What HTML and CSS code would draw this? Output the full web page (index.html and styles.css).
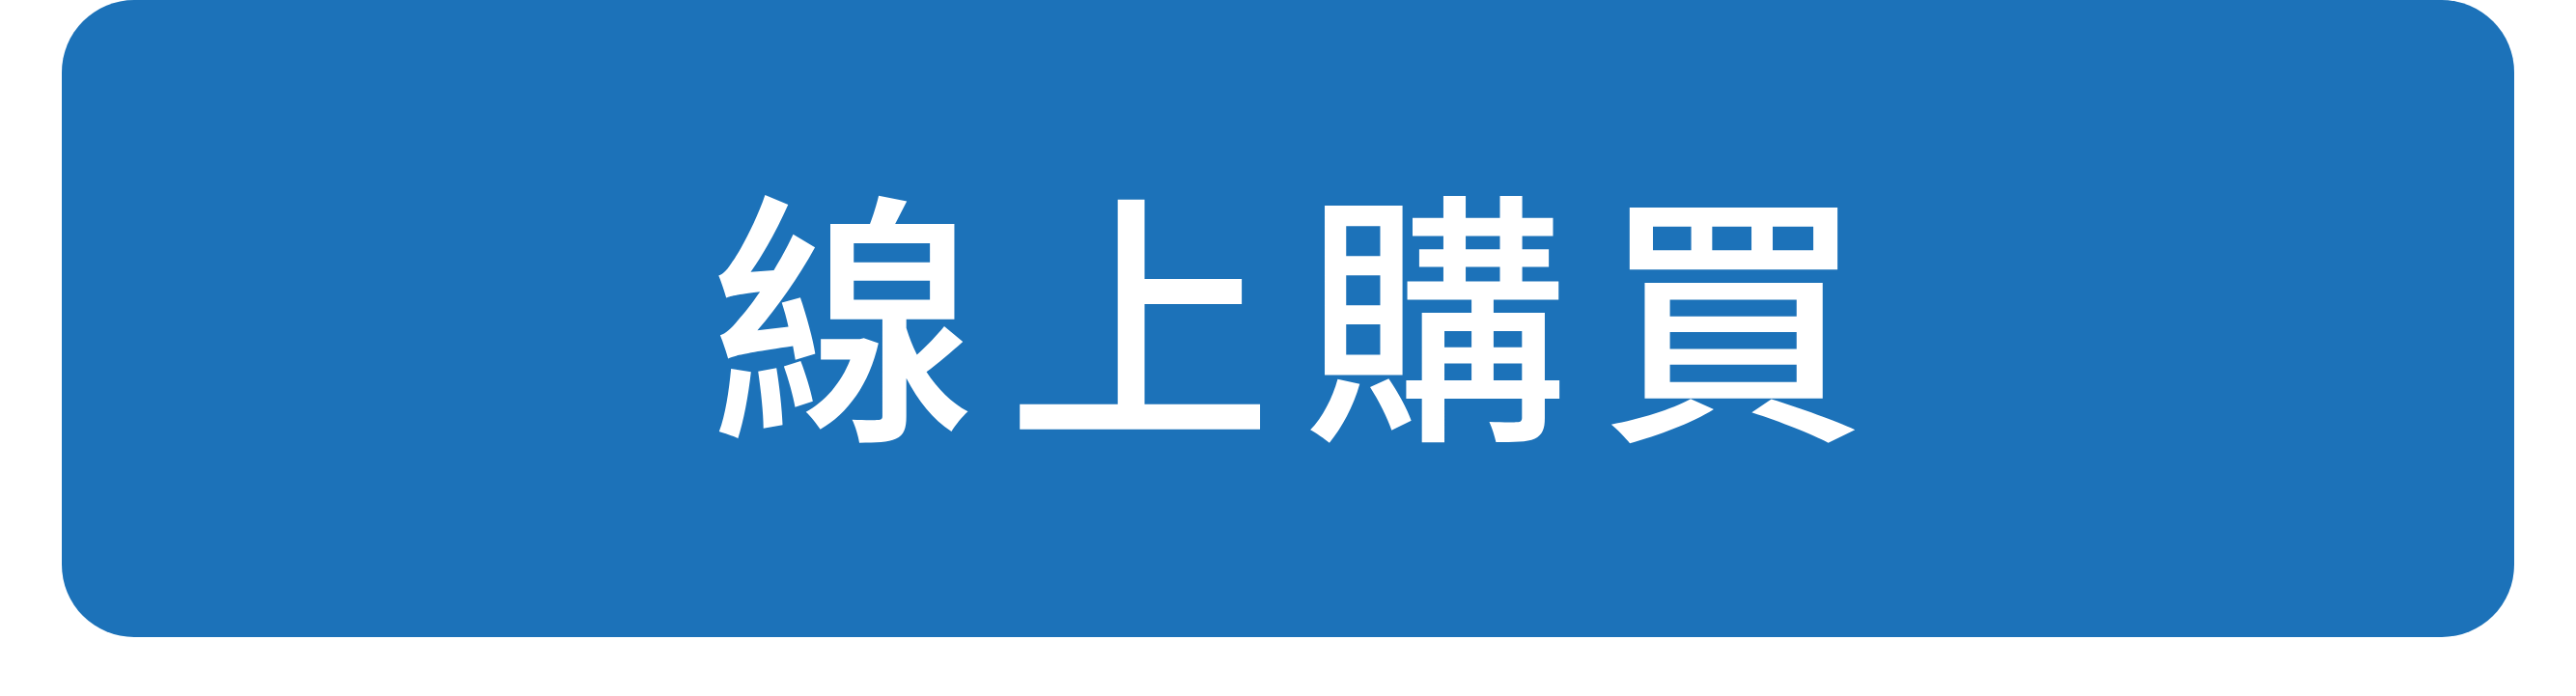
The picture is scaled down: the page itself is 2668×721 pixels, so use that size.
FILE: index.html
```html
<!DOCTYPE html>
<html lang="zh-Hant">
<head>
    <meta charset="UTF-8">
    <meta name="viewport" content="width=device-width, initial-scale=1.0">
    <title>線上購買</title>
    <link rel="stylesheet" href="styles.css">
</head>
<body>
    <div class="wrap">
        <a class="buy-button" href="#">線上購買</a>
    </div>
</body>
</html>
```

FILE: styles.css
```css
body {
    margin: 0;
    padding: 0;
    background-color: #ffffff;
    font-family: "Noto Sans CJK TC", "Noto Sans CJK SC", sans-serif;
}

.wrap {
    padding: 0 64px;
    height: 721px;
}

/* big blue call-to-action */
.buy-button {
    box-sizing: border-box;
    display: flex;
    align-items: center;
    justify-content: center;
    height: 660px;
    padding-bottom: 30px; /* glyphs sit low in the em box, lift them to the middle */
    background-color: #1c72b9;
    border-radius: 75px;
    color: #ffffff;
    text-decoration: none;
    font-size: 275px;
    font-weight: 500;
    letter-spacing: 32px;
    text-indent: 32px;
    line-height: 1;
}
```
